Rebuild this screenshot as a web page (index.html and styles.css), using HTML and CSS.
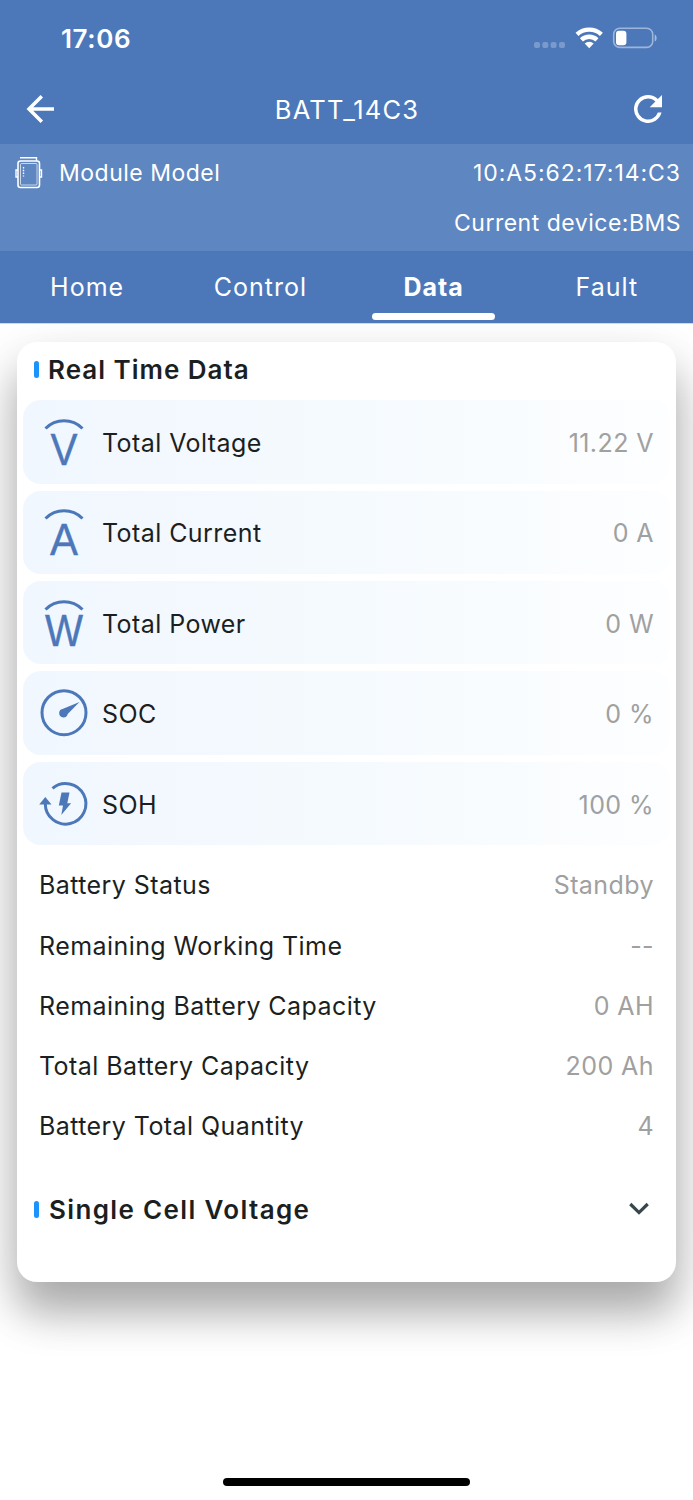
FILE: index.html
```
<!DOCTYPE html>
<html lang="en">
<head>
<meta charset="utf-8">
<title>BATT_14C3</title>
<link rel="stylesheet" href="styles.css">
</head>
<body>
<div class="screen">
  <header class="top">
    <div class="status">
      <span class="time">17:06</span>
      <svg class="status-icons" width="126" height="24" viewBox="0 0 126 24">
        <g fill="#fff" opacity=".25"><rect x="1" y="16" width="6" height="6" rx="2"/><rect x="9.300" y="16" width="6" height="6" rx="2"/><rect x="17.600" y="16" width="6" height="6" rx="2"/><rect x="26" y="16" width="6" height="6" rx="2"/></g>
        <g fill="none" stroke="#fff" stroke-width="4.300"><path d="M44 8.400a18 18 0 0 1 24.400 0"/><path d="M48.400 13.900a11.200 11.200 0 0 1 15.600 0"/></g>
        <path d="M51.700 17.600a6.400 6.400 0 0 1 9 0l-4.500 4.600z" fill="#fff"/>
        <rect x="80.700" y="2.200" width="39" height="19.200" rx="6" fill="none" stroke="#fff" stroke-opacity=".45" stroke-width="1.600"/>
        <rect x="83" y="4.700" width="10.400" height="14.500" rx="3" fill="#fff"/>
        <path d="M121.700 8.500c2.600 1 2.600 6 0 7z" fill="#fff" opacity=".5"/>
      </svg>
    </div>
    <div class="nav">
      <svg width="28" height="28" viewBox="0 0 28 28" fill="none" stroke="#fff" stroke-width="3.500"><path d="M28 14H3M15.800 1.300L3 14l12.800 12.700"/></svg>
      <h1 class="title">BATT_14C3</h1>
      <svg width="28" height="28" viewBox="4 4 16 16" fill="#fff"><path d="M17.650 6.350A7.958 7.958 0 0 0 12 4a8 8 0 1 0 7.730 10h-2.080A6 6 0 1 1 12 6c1.660 0 3.140.690 4.220 1.780L13 11h7V4z"/></svg>
    </div>
  </header>
  <section class="module">
    <div class="module-row">
      <svg width="28" height="34" viewBox="0 0 28 34" fill="none" stroke="#fff" stroke-width="1.400"><path d="M5 1.700h16.500v3"/><rect x="3" y="5" width="21.500" height="26.500" rx="2.500" stroke-width="1.600"/><rect x="5.500" y="7.500" width="16.500" height="21.500" rx="1" stroke-width=".9" opacity=".75"/><path d="M3 14H1v7h2M24.500 14h2v7h-2"/><path d="M8.500 11v9.500" stroke-dasharray="1.500 1.300"/></svg>
      <span class="module-name">Module Model</span>
      <span class="mac">10:A5:62:17:14:C3</span>
    </div>
    <div class="device">Current device:BMS</div>
  </section>
  <nav class="tabs">
    <span class="tab">Home</span><span class="tab">Control</span><span class="tab active">Data</span><span class="tab">Fault</span>
  </nav>
  <main class="body">
    <section class="card">
      <h2 class="heading"><i class="mark"></i><span>Real Time Data</span></h2>
      <div class="tiles">
        <div class="tile"><svg class="icon" viewBox="0 0 48 48"><path class="ln" d="M5.500 10.500a26 26 0 0 1 37 0"/><text class="unit" x="10.500" y="46.600" textLength="27" lengthAdjust="spacingAndGlyphs">V</text></svg><span>Total Voltage</span><b>11.22 V</b></div>
        <div class="tile"><svg class="icon" viewBox="0 0 48 48"><path class="ln" d="M5.500 10.500a26 26 0 0 1 37 0"/><text class="unit" x="10" y="46.600" textLength="28" lengthAdjust="spacingAndGlyphs">A</text></svg><span>Total Current</span><b>0 A</b></div>
        <div class="tile"><svg class="icon" viewBox="0 0 48 48"><path class="ln" d="M5.500 10.500a26 26 0 0 1 37 0"/><text class="unit" x="5" y="46.600" textLength="38" lengthAdjust="spacingAndGlyphs">W</text></svg><span>Total Power</span><b>0 W</b></div>
        <div class="tile"><svg class="icon" viewBox="0 0 48 48"><circle class="ln" cx="24" cy="23.700" r="22"/><path class="solid" d="M39.500 13L22.500 20a4.300 4.300 0 1 0 5.200 5z"/></svg><span>SOC</span><b>0 %</b></div>
        <div class="tile"><svg class="icon" viewBox="0 0 48 48"><path class="ln" d="M12.500 8.300A20.300 20.300 0 1 1 5.300 23.700"/><path class="solid" d="M-.8 24.500L5.300 17 11.500 24.500zM21.500 12.500h8l-2.200 10.800h3.800L21.300 35l1.700-9.400h-4.200z"/></svg><span>SOH</span><b>100 %</b></div>
      </div>
      <div class="list">
        <div class="line"><span>Battery Status</span><b>Standby</b></div>
        <div class="line"><span>Remaining Working Time</span><b>--</b></div>
        <div class="line"><span>Remaining Battery Capacity</span><b>0 AH</b></div>
        <div class="line"><span>Total Battery Capacity</span><b>200 Ah</b></div>
        <div class="line"><span>Battery Total Quantity</span><b>4</b></div>
      </div>
      <h2 class="heading second"><i class="mark"></i><span>Single Cell Voltage</span>
        <svg class="chev" width="20" height="14" viewBox="0 0 20 14" fill="none" stroke="#37474b" stroke-width="3.200"><path d="M1.300 2L10 10.600 18.700 2"/></svg></h2>
    </section>
  </main>
  <div class="home-bar"></div>
</div>
</body>
</html>
```
FILE: styles.css
```
* { box-sizing: border-box; }
body { margin: 0; background: #fff; font-family: Inter, "Liberation Sans", sans-serif; font-size: 25px; letter-spacing: .43px; color: #1c1f22; }
.screen { width: 693px; height: 1500px; display: flex; flex-direction: column; overflow: hidden; }
.top { height: 144px; background: #4c78ba; color: #fff; }
.status { height: 76px; display: flex; align-items: center; justify-content: space-between; padding: 0 34px 0 61px; }
.time { font-size: 26px; font-weight: 600; letter-spacing: .6px; }
.status-icons { display: block; }
.nav { height: 66px; display: flex; align-items: center; justify-content: space-between; padding: 0 31px 0 26px; }
.title { margin: 0; padding-left: 6px; font-size: 25.500px; font-weight: 400; letter-spacing: 1.200px; }
.module { height: 107px; background: #5e86c0; color: #fff; padding: 4px 12px 0 15px; font-size: 23px; letter-spacing: .5px; }
.module-row { height: 50px; display: flex; align-items: center; }
.module-name { margin-left: 16px; }
.mac { margin-left: auto; letter-spacing: .950px; }
.device { height: 50px; line-height: 51px; text-align: right; }
.tabs { height: 73px; display: grid; grid-template-columns: repeat(4, 1fr); background: #4c78ba; border-bottom: 1px solid #c9dce6; color: #fff; letter-spacing: 1px; }
.tab { position: relative; line-height: 73px; padding-left: 1px; text-align: center; }
.active { font-weight: 700; }
.active::after { content: ""; position: absolute; left: 25px; bottom: 4px; width: 123px; height: 7px; border-radius: 4px; background: #fff; }
.body { padding: 18px 17px 0; flex: 1; overflow: hidden; }
.card { height: 940px; border-radius: 20px; background: #fff; padding: 0 6px; box-shadow: 0 32px 40px rgba(0,0,0,.25), 0 18px 56px rgba(0,0,0,.14); }
.heading { height: 58.300px; margin: 0; padding: 0 0 3px 11px; display: flex; align-items: center; font-size: 26px; font-weight: 600; letter-spacing: 1px; }
.mark { width: 5px; height: 17px; border-radius: 2.500px; background: #1b93fb; margin-right: 9px; }
.tiles { display: grid; gap: 7px; }
.tile { height: 83.400px; border-radius: 18px; background: linear-gradient(90deg, #f1f7ff, #f5fafe 50%, #fdfeff); display: flex; align-items: center; padding: 0 16px 0 17px; }
.tile span, .tile b { padding-top: 2px; }
.icon { width: 48px; height: 48px; margin-right: 14px; overflow: visible; }
.ln { fill: none; stroke: #4c78ba; stroke-width: 3; }
.solid { fill: #4c78ba; }
.unit { fill: #4c78ba; stroke: #4c78ba; stroke-width: .4; font: 43.500px "Liberation Sans", sans-serif; letter-spacing: 0; }
b { font-weight: 400; color: #a0a0a0; margin-left: auto; }
.list { padding: 10px 16px 0; }
.line { height: 60.200px; display: flex; align-items: center; }
.second { margin-top: 24px; padding-bottom: 0; letter-spacing: 1.350px; }
.second .mark { margin-right: 10px; }
.chev { margin: 0 21px 0 auto; }
.home-bar { position: absolute; left: 223px; top: 1478px; width: 247px; height: 8px; border-radius: 4px; background: #000; }
```
